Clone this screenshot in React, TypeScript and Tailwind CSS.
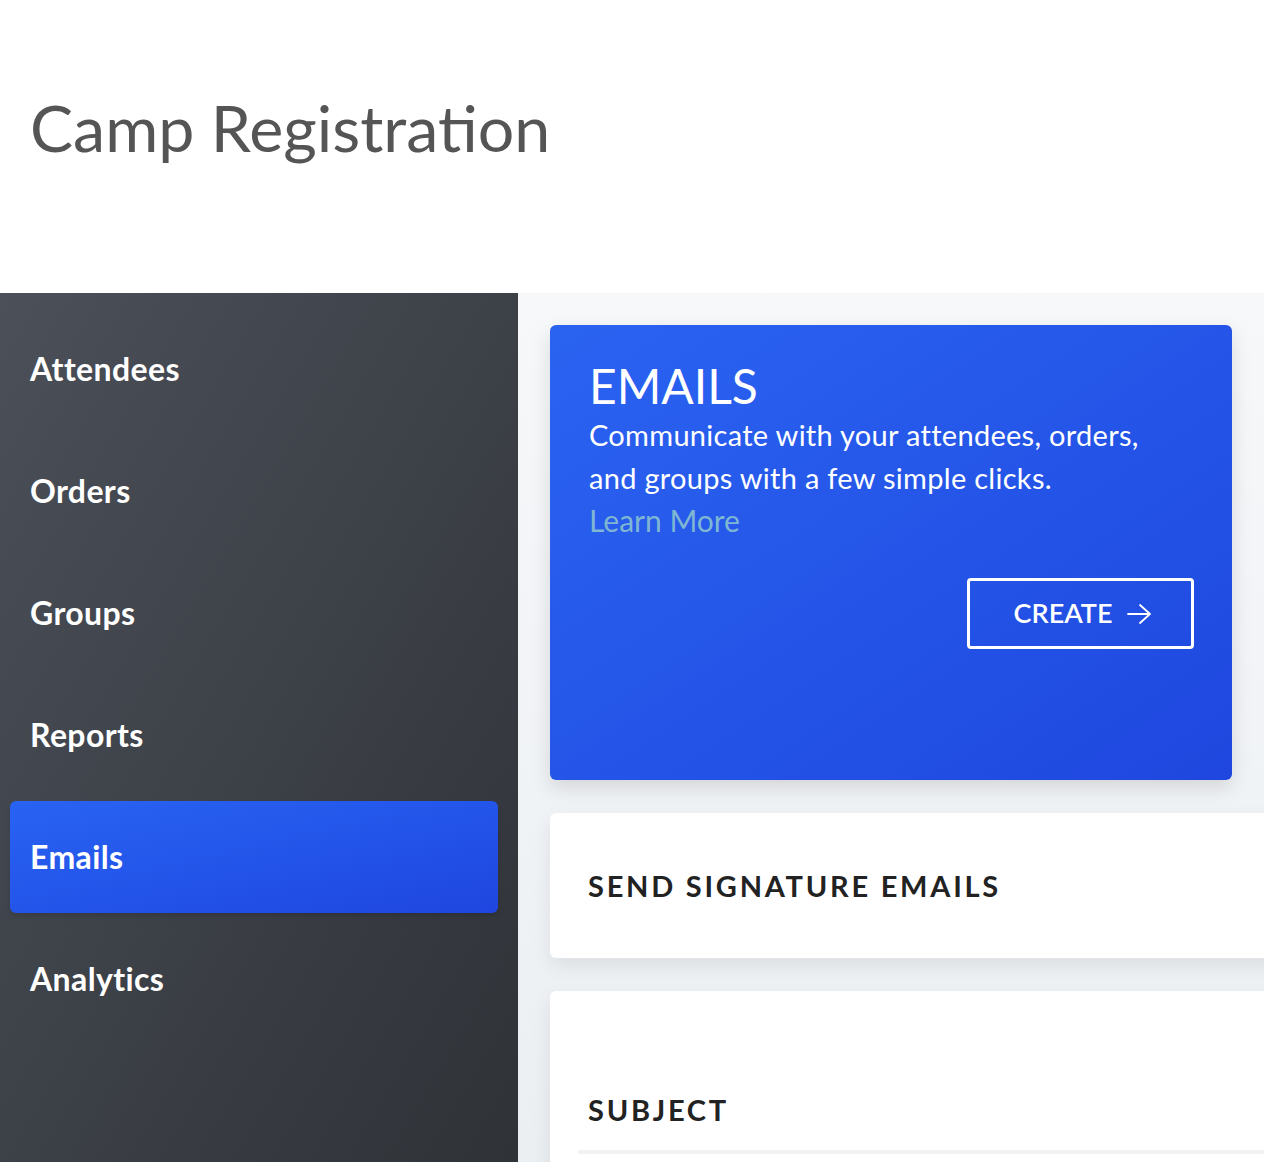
import React from 'react';

const navItems = ['Attendees', 'Orders', 'Groups', 'Reports', 'Emails', 'Analytics'];

const App: React.FC = () => {
  const active = 'Emails';

  return (
    <div className="h-[1162px] w-[1264px] overflow-hidden bg-white font-['Lato',sans-serif]">
      {/* Header */}
      <div className="flex h-[293px] items-start px-[30px] pt-[87px]">
        <h1 className="text-[64.5px] font-normal leading-[80px] text-[#555555]">Camp Registration</h1>
      </div>

      <div className="flex h-[869px]">
        {/* Sidebar */}
        <nav className="flex w-[518px] shrink-0 flex-col gap-[10px] bg-gradient-to-br from-[#4b5059] to-[#2f3237] pt-[20px] pr-[20px] pl-[10px]">
          {navItems.map((item) => (
            <div
              key={item}
              className={`flex h-[112px] items-center rounded-[6px] pl-[20px] text-[32px] font-bold tracking-[0.012em] text-white ${
                item === active ? 'bg-gradient-to-br from-[#2963f3] to-[#1f46e0] shadow-md' : ''
              }`}
            >
              {item}
            </div>
          ))}
        </nav>

        {/* Main */}
        <main className="flex flex-1 flex-col gap-[33px] overflow-hidden bg-gradient-to-b from-[#f6f8fa] to-[#eceff2] pt-[32px] pl-[32px]">
          <div className="flex h-[455px] w-[682px] shrink-0 flex-col rounded-[6px] bg-gradient-to-br from-[#2b63f1] to-[#1f47df] pl-[39px] pr-[38px] pt-[34px] text-white shadow-[0_8px_20px_rgba(0,0,0,0.12)]">
            <h2 className="text-[48px] font-normal leading-[54px]">EMAILS</h2>
            <p className="text-[29px] leading-[43px] tracking-[0.01em]">
              Communicate with your attendees, orders,
              <br />
              and groups with a few simple clicks.
            </p>
            <a className="text-[30px] font-normal leading-[43px] text-[#7fb6d3]">Learn More</a>
            <div className="mt-[36px] flex justify-end">
              <button className="flex h-[71px] w-[227px] items-center justify-center gap-[15px] rounded-[4px] border-[3px] border-white pl-[4px] text-[27px] font-semibold text-white">
                CREATE
                <svg width="24" height="22" viewBox="0 0 24 22" fill="none" stroke="white" strokeWidth="1.8" strokeLinecap="round" strokeLinejoin="round">
                  <path d="M1 11h22M13 2l10 9-10 9" />
                </svg>
              </button>
            </div>
          </div>

          <div className="flex h-[145px] w-[760px] shrink-0 items-center rounded-l-[6px] bg-white pl-[38px] shadow-[0_8px_20px_rgba(0,0,0,0.08)]">
            <h3 className="text-[29px] font-bold tracking-[0.095em] text-[#222222]">SEND SIGNATURE EMAILS</h3>
          </div>

          <div className="flex h-[200px] w-[760px] shrink-0 flex-col rounded-l-[6px] bg-white pl-[28px] pt-[97px] shadow-[0_8px_20px_rgba(0,0,0,0.08)]">
            <h3 className="pl-[10px] text-[29px] font-bold tracking-[0.095em] text-[#222222]">SUBJECT</h3>
            <div className="mt-[18px] h-[4px] w-full bg-[#f1f2f3]" />
          </div>
        </main>
      </div>
    </div>
  );
};

export default App;
